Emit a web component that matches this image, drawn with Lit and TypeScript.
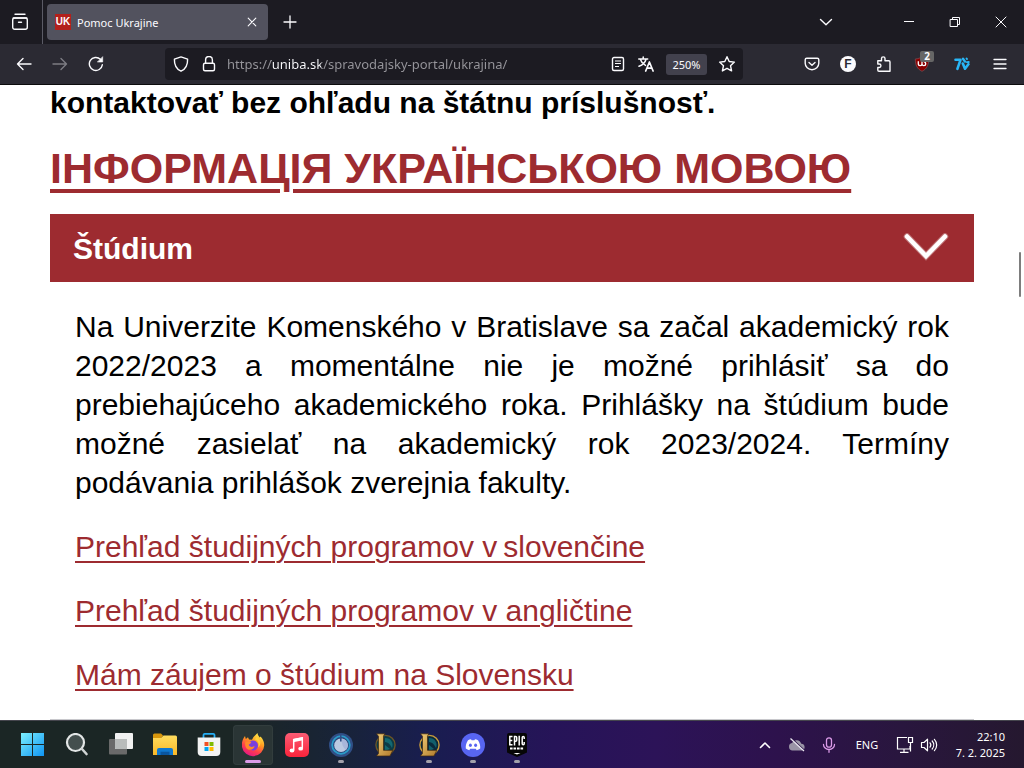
import { LitElement, html, css, svg, TemplateResult } from "lit";
import { customElement } from "lit/decorators.js";

/* ---------- browser icons ---------- */
const line = (size: number, body: TemplateResult) => html`<svg
  width=${size} height=${size} viewBox="0 0 ${size} ${size}" fill="none" stroke="currentColor"
  stroke-width="1.4" stroke-linecap="round" stroke-linejoin="round" aria-hidden="true">${body}</svg>`;

const icons = {
  view: line(18, svg`<path d="M4 1.2h10"/><path d="M2.2 5h13.6"/><rect x="1.7" y="5" width="14.6" height="11.3" rx="2"/><path d="M7.5 9.2h3"/>`),
  closeTab: line(10, svg`<path d="M1.2 1.2l7.6 7.6M8.8 1.2l-7.6 7.6" stroke-width="1.1"/>`),
  plus: line(14, svg`<path d="M7 1v12M1 7h12" stroke-width="1.3"/>`),
  chevron: line(14, svg`<path d="M1.5 4.5L7 9.8l5.5-5.3"/>`),
  minimize: line(12, svg`<path d="M1 5.5h10" stroke-width="1" stroke-linecap="butt"/>`),
  restore: line(12, svg`<path d="M1.5 3.5h7v7h-7zM3.5 3.5v-2h7v7h-2" stroke-width="1" stroke-linejoin="miter"/>`),
  close: line(12, svg`<path d="M1 1l10 10M11 1L1 11" stroke-width="1"/>`),
  back: line(16, svg`<path d="M15 8H1.5M7 2.5L1.5 8 7 13.5"/>`),
  forward: line(16, svg`<path d="M1 8h13.500M9 2.500L14.500 8 9 13.500"/>`),
  reload: line(16, svg`<path d="M14.300 8.800A6.500 6.500 0 1 1 12.400 3.300"/><path d="M14.700 1v5h-5z" fill="currentColor" stroke-width=".6"/>`),
  shield: line(16, svg`<path d="M8 .9L14.600 3.200c.2 5.600-1.700 9.700-6.600 12C3.100 12.900 1.200 8.800 1.400 3.200z"/>`),
  lock: line(16, svg`<rect x="2.500" y="7.200" width="11" height="7.600" rx="1.500"/><path d="M4.600 7V3.900a3.400 3.400 0 0 1 6.800 0V7"/>`),
  reader: line(16, svg`<rect x="2.500" y="1.500" width="11" height="13" rx="1.500"/><path d="M5 5h6M5 7.500h6M5 10.500h4" stroke-width="1.200" stroke-linecap="butt"/>`),
  translate: line(16, svg`<path d="M.7 3h9M5.200 .9V3M2.300 3.200c1 3 3 5 5.200 6.200M8 3.200C7.300 6 4.500 9 1 10.300" stroke-width="1.500"/><path d="M7.700 15l3.700-9 3.700 9M9 12.200h4.900" stroke-width="1.700"/>`),
  star: line(18, svg`<path d="M9 1.700l2.200 4.800 5.200.6-3.900 3.600 1.100 5.200L9 13.300l-4.600 2.600 1.100-5.200L1.600 7.100l5.200-.6z"/>`),
  pocket: line(16, svg`<path d="M2.700 2.200h10.600a1.500 1.500 0 0 1 1.500 1.500v3.500a6.800 6.500 0 0 1-13.600 0V3.700a1.500 1.500 0 0 1 1.500-1.500z"/><path d="M5 6.500l3 2.700 3-2.700"/>`),
  puzzle: line(16, svg`<path d="M1.800 4.800h3.700V2.600a1.700 1.700 0 0 1 3.500 0v2.200h3.800a1.200 1.200 0 0 1 1.200 1.200v9.200H3a1.200 1.200 0 0 1-1.200-1.200v-2.500h1.400a1.700 1.700 0 0 0 0-3.500H1.800z"/>`),
  menu: line(14, svg`<path d="M1 2.500h12M1 7h12M1 11.500h12" stroke-width="1.300"/>`),
  seven: html`<svg width="16" height="14" viewBox="0 0 16 14" aria-hidden="true"><g fill="none" stroke="#29b6f6" stroke-linecap="round" stroke-linejoin="round"><path d="M1.500 2.800h5L3.400 11.800" stroke-width="2.600"/><path d="M8.800 6.500l2.200 5.200 3.400-4.500" stroke-width="2.600"/><path d="M9 1.800l2 2.800" stroke-width="2.400"/><path d="M12.500 1.500l.5.500M12.800 5.200l2-.2" stroke-width="1.800"/></g></svg>`,
  ublock: html`<svg width="16" height="16" viewBox="0 0 16 16" aria-hidden="true"><path d="M8 .8c2 1.300 4 2 6.700 2.200 0 6-1.600 9.800-6.700 12.300C2.900 12.800 1.300 9 1.300 3 4 2.800 6 2.100 8 .8z" fill="#8a0000" stroke="#7a4a50" stroke-width=".8"/><path d="M4.300 5.200v2.600a1.850 1.850 0 0 0 3.700 0V5.200M8 7.800a1.850 1.850 0 0 0 3.700 0c0-1.500-1-2-1.800-2" fill="none" stroke="#fff" stroke-width="1.300"/></svg>`,
  accordion: html`<svg width="48" height="32" viewBox="0 0 48 32" fill="none" stroke="#fff" stroke-linecap="round" aria-hidden="true"><path d="M5 4.500l19 19.500L43 4.500" stroke-width="6.500" opacity=".35"/><path d="M5 4.500l19 19.500L43 4.500" stroke-width="4.500"/></svg>`,
};

/* ---------- taskbar icons ---------- */
const league = (rim: string, teal: string) => svg`
  <circle cx="12.500" cy="12" r="9.600" fill=${teal} stroke=${rim} stroke-width="1.400"/>
  <path d="M12 5c6 0 9 5 7 10-2-4-4-6-7-6zM12 12l5 4-5 2z" fill="#1a8d93" opacity=".55"/>
  <path d="M3.500 .8h8.300l-1.300 2.300v14.200h9.300L17 23H3.500l2-2.600V3.300z" fill="url(#gold)" stroke="#3c260e" stroke-width=".7"/>`;

const pic = (name: string, body: TemplateResult) => ({
  name,
  art: html`<svg width="24" height="24" viewBox="0 0 24 24" aria-hidden="true">
    <defs>
      <linearGradient id="win" gradientUnits="userSpaceOnUse" x1="0" y1="0" x2="24" y2="24"><stop offset="0" stop-color="#7cf0ff"/><stop offset="1" stop-color="#0a90f2"/></linearGradient>
      <linearGradient id="gold" x1="0" y1="0" x2="1" y2="1"><stop offset="0" stop-color="#f0cc76"/><stop offset="1" stop-color="#b07a2c"/></linearGradient>
      <linearGradient id="folder" x1="0" y1="0" x2="0" y2="1"><stop offset="0" stop-color="#ffdc5e"/><stop offset="1" stop-color="#f9b827"/></linearGradient>
      <linearGradient id="fox" x1=".8" y1="0" x2=".3" y2="1"><stop offset="0" stop-color="#fff44f"/><stop offset=".4" stop-color="#ff9a1f"/><stop offset=".7" stop-color="#ff3f4b"/><stop offset="1" stop-color="#e31587"/></linearGradient>
      <linearGradient id="music" x1="0" y1="0" x2="0" y2="1"><stop offset="0" stop-color="#fb5c74"/><stop offset="1" stop-color="#fa233b"/></linearGradient>
    </defs>${body}</svg>`,
});

type App = { name: string; art: TemplateResult; state?: "active" | "open" };
const apps: App[] = [
  pic("Štart", svg`<path d="M0 0h11v11H0zM12 0h11v11H12zM0 12h11v11H0zM12 12h11v11H12z" fill="url(#win)"/>`),
  pic("Hľadať", svg`<circle cx="10.500" cy="9.500" r="8.500" fill="#444f4e" stroke="#e3e6e6" stroke-width="2.200"/><path d="M17 16l4.500 5" stroke="#d0d4d4" stroke-width="2.600" stroke-linecap="round"/>`),
  pic("Zobrazenie úloh", svg`<rect x="0" y="6" width="18" height="15.500" rx="1" fill="#6a6a6a"/><rect x="6" y="0" width="18" height="16" rx="1" fill="#f1f1f1"/><path d="M6 6h12v10H7a1 1 0 0 1-1-1z" fill="#b9bcbb"/>`),
  pic("Prieskumník", svg`<path d="M0 2A1.500 1.500 0 0 1 1.500.5H8l2 2-2 3H0z" fill="#d8960c"/><path d="M0 5h8L10.500 2.500H22.500A1.500 1.500 0 0 1 24 4V22H0z" fill="url(#folder)"/><path d="M4 22V17A2 2 0 0 1 6 15H18a2 2 0 0 1 2 2V22z" fill="#0f78cf"/><path d="M7.500 18.700h9V22h-9z" fill="#0a559e"/>`),
  pic("Obchod", svg`<path d="M6.500 5V1.900A1.200 1.200 0 0 1 7.700.9h8.600a1.200 1.200 0 0 1 1.200 1V5" fill="none" stroke="#26aef5" stroke-width="1.800"/><path d="M.7 4.500h22.600V19a4 4 0 0 1-4 4H4.700a4 4 0 0 1-4-4z" fill="#f3f3f3"/><path d="M7.500 9h4v4h-4z" fill="#f25022"/><path d="M12.500 9h4v4h-4z" fill="#7fba00"/><path d="M7.500 14h4v4h-4z" fill="#00a4ef"/><path d="M12.500 14h4v4h-4z" fill="#ffb900"/>`),
  { ...pic("Firefox", svg`<path d="M1 9.500C1.500 7 2.500 4.800 4 3l.8 3L7 4.200l1 2.300 3 .3L12.500 4 16.500 0c.2 2.200 1.200 3.200 2.300 4.500l.8-1C22.500 7 23.300 9.700 23.200 12.500A11.200 11.200 0 0 1 1 14z" fill="url(#fox)"/><circle cx="12" cy="12.500" r="5" fill="#7a3fe0"/><path d="M4.500 8.500l6 .3-1.500 2.200c-1.500.2-1.500 1.300-.3 2.200 2 1.300 3.800.5 5-.5-.5 3-3.200 4.600-6 4C4.500 15.600 3.500 12 4.500 8.500z" fill="#ff8a2a"/><path d="M14 6.500c3 1 4.500 4 3 8 1.500-1 3-3.500 2.300-6.500L16 3.500z" fill="#ffcf3b"/>`), state: "active" },
  pic("Hudba", svg`<rect width="24" height="24" rx="5" fill="url(#music)"/><path d="M8.700 17V6.700L17.300 5v10" fill="none" stroke="#fff" stroke-width="1.500"/><path d="M8 6l10-2v3.200L8 9.200z" fill="#fff"/><ellipse cx="7" cy="17.500" rx="2.400" ry="1.900" fill="#fff"/><ellipse cx="15.700" cy="15.700" rx="2.400" ry="1.900" fill="#fff"/>`),
  { ...pic("Klient", svg`<circle cx="12" cy="12" r="12" fill="#304f86"/><circle cx="12" cy="12" r="8.800" fill="#2b4478" stroke="#2a9cc8" stroke-width="1.800"/><circle cx="12" cy="12.300" r="6.800" fill="#bccae2"/><path d="M12.500 5.500a6.800 6.800 0 0 1 4.500 11.400c-3-2-4.500-6-4.500-11.400z" fill="#a9b7da"/><path d="M11 1.500h1.600v7H11z" fill="#304f86"/>`), state: "open" },
  pic("League of Legends", league("#6d5526", "#0c3b46")),
  { ...pic("Riot", league("#c89b3c", "#0a2a3c")), state: "open" },
  { ...pic("Discord", svg`<circle cx="12" cy="12" r="12" fill="#5865f2"/><path d="M7 7.200c1-.6 2-.9 3-1l.6 1h2.800l.6-1c1 .1 2 .4 3 1 1.700 2.600 2.500 5.300 2.200 8.300-1.100.9-2.300 1.400-3.500 1.700l-.9-1.500H9.200l-.9 1.500c-1.200-.3-2.400-.8-3.500-1.700-.3-3 .5-5.700 2.200-8.300z" fill="#fff"/><ellipse cx="9.400" cy="12.300" rx="1.500" ry="1.700" fill="#5865f2"/><ellipse cx="14.600" cy="12.300" rx="1.500" ry="1.700" fill="#5865f2"/>`), state: "open" },
  { ...pic("Epic Games", svg`<path d="M4 0h16a2 2 0 0 1 2 2v17.500L12 24 2 19.500V2a2 2 0 0 1 2-2z" fill="#060606"/><g fill="none" stroke="#fff" stroke-width="1.500"><path d="M7.500 3.500H4.800v8.200h2.700M4.800 7.500h2.500M9.500 12.400V3.500h1.200a1 1 0 0 1 1 1v2.800a1 1 0 0 1-1 1H9.500M14.200 2.800v9.600M19.200 6V4.500a1 1 0 0 0-2 0v6.200a1 1 0 0 0 2 0V9"/></g><path d="M5 15.500h14" stroke="#fff" stroke-width="2" stroke-dasharray="2.600 .9"/><path d="M8.500 20h7L12 21.600z" fill="#fff"/>`), state: "open" },
];

const tray = {
  up: line(14, svg`<path d="M2.500 9.500L7 5l4.500 4.500" stroke-width="1.600"/>`),
  cloud: html`<svg width="18" height="16" viewBox="0 0 18 16" aria-hidden="true"><path d="M4.500 13.500a3.800 3.800 0 0 1-.5-7.500 5 5 0 0 1 9.300.8 3.400 3.400 0 0 1 .7 6.700z" fill="#9a94a6"/><path d="M3 1l13.500 12.500" stroke="#2b1548" stroke-width="1.500"/><path d="M2.500 1.500l13.500 12.500" stroke="#ece8f2" stroke-width="1.200"/></svg>`,
  mic: html`<svg width="14" height="16" viewBox="0 0 14 16" fill="none" stroke="#dc9be8" stroke-width="1.300" stroke-linecap="round" aria-hidden="true"><rect x="4.500" y=".8" width="5" height="9.400" rx="2.500"/><path d="M1.500 7.500a5.500 5 0 0 0 11 0M7 12.700v2.600"/></svg>`,
  screen: html`<svg width="18" height="18" viewBox="0 0 18 18" fill="none" stroke="#fff" stroke-width="1.200" aria-hidden="true"><path d="M11 1.500H1.500v11.500h12.500V10M8 13v3M4 16.400h8.500M12.500 1.500h4v5h-4zM14.500 6.500v9"/></svg>`,
  sound: html`<svg width="18" height="16" viewBox="0 0 18 16" fill="none" stroke="#fff" stroke-width="1.200" stroke-linecap="round" stroke-linejoin="round" aria-hidden="true"><path d="M1.500 5.500h2.500l3.500-3.300v11.600L4 10.500H1.500zM10 5.800c1 1.300 1 3.100 0 4.400M12.200 4c2 2.300 2 5.700 0 8M14.400 2.300c3 3.200 3 8.200 0 11.400"/></svg>`,
};

@customElement("browser-chrome")
export class BrowserChrome extends LitElement {
  static styles = css`
    :host { display: block; flex: none; color: #fbfbfe; font-family: "Noto Sans", "Open Sans", sans-serif; font-size: 12px; border-bottom: 1px solid #0c0c0d; }
    button { all: unset; box-sizing: border-box; display: grid; place-items: center; flex: none; }
    svg { display: block; }
    .tabs { display: flex; height: 44px; background: #1c1b22; }
    .view { width: 40px; }
    .rule { width: 1px; margin: 0 4px 0 2px; background: #5b5b66; }
    .tab { display: flex; align-items: center; width: 221px; box-sizing: border-box; margin: 4px 0; padding: 0 6px 0 8px; border-radius: 4px; background: #52525e; }
    .fav { width: 16px; height: 16px; margin-right: 6px; background: #b3201b; font: bold 10px/16px "Liberation Sans", sans-serif; text-align: center; }
    .title { flex: 1; font-size: 11px; white-space: nowrap; }
    .closeTab { width: 20px; height: 24px; }
    .add { width: 44px; }
    .list { width: 36px; margin: 0 42px 0 auto; }
    .win { width: 46px; }
    .nav { display: flex; align-items: center; height: 40px; padding: 0 6px; background: #2b2a33; }
    .nav > button { width: 36px; height: 32px; }
    .nav > .wide { width: 40px; }
    .nav > .dim { color: #7d7c83; }
    .field { display: flex; flex: 1; align-items: center; height: 32px; box-sizing: border-box; margin: 0 51px; padding: 0 2px; border-radius: 4px; background: #1c1b22; min-width: 0; }
    .field button { width: 28px; height: 28px; }
    .url { flex: 1; min-width: 0; height: 28px; border: 0; padding: 0 4px; outline: 0; font: 13px "Noto Sans", "Open Sans", sans-serif; color: transparent; -webkit-background-clip: text; background-clip: text; background-image: linear-gradient(90deg, #97969c 0 48px, #fbfbfe 48px 98px, #97969c 98px); }
    .field .level { display: block; width: 41px; height: 21px; margin: 0 6px; border-radius: 3px; background: #42414d; font-size: 11px; line-height: 21px; text-align: center; }
    .face { width: 16px; height: 16px; border-radius: 8px; background: #fbfbfe; color: #2b2a33; font: bold 12px/16px "Liberation Sans", sans-serif; text-align: center; }
    .badged { position: relative; }
    .badge { position: absolute; left: 18px; top: 3px; width: 14px; height: 11px; border-radius: 2px; background: #666; font: bold 10px/11px "Open Sans", sans-serif; text-align: center; }
  `;
  render() {
    return html`
      <div class="tabs">
        <button class="view" aria-label="Firefox View">${icons.view}</button>
        <div class="rule"></div>
        <div class="tab">
          <span class="fav">UK</span><span class="title">Pomoc Ukrajine</span>
          <button class="closeTab" aria-label="Zavrieť kartu">${icons.closeTab}</button>
        </div>
        <button class="add" aria-label="Nová karta">${icons.plus}</button>
        <button class="list" aria-label="Zoznam kariet">${icons.chevron}</button>
        <button class="win" aria-label="Minimalizovať">${icons.minimize}</button>
        <button class="win" aria-label="Obnoviť">${icons.restore}</button>
        <button class="win" aria-label="Zavrieť">${icons.close}</button>
      </div>
      <div class="nav">
        <button aria-label="Späť">${icons.back}</button>
        <button class="dim" aria-label="Dopredu">${icons.forward}</button>
        <button aria-label="Obnoviť stránku">${icons.reload}</button>
        <div class="field">
          <button aria-label="Ochrana">${icons.shield}</button>
          <button aria-label="Zabezpečenie">${icons.lock}</button>
          <input class="url" aria-label="Adresa" .value=${"https://uniba.sk/spravodajsky-portal/ukrajina/"} />
          <button aria-label="Čítačka">${icons.reader}</button>
          <button aria-label="Preložiť">${icons.translate}</button>
          <button class="level">250%</button>
          <button aria-label="Záložka">${icons.star}</button>
        </div>
        <button aria-label="Pocket">${icons.pocket}</button>
        <button aria-label="Účet"><span class="face">F</span></button>
        <button aria-label="Rozšírenia">${icons.puzzle}</button>
        <button class="wide badged" aria-label="uBlock">${icons.ublock}<span class="badge">2</span></button>
        <button class="wide" aria-label="7TV">${icons.seven}</button>
        <button aria-label="Ponuka">${icons.menu}</button>
      </div>`;
  }
}

@customElement("task-bar")
export class TaskBar extends LitElement {
  static styles = css`
    :host { display: flex; flex: none; align-items: center; height: 48px; box-sizing: border-box; padding: 0 19px 0 13px; border-top: 1px solid #45454d; color: #fff; font: 11px/16px "Noto Sans", "Open Sans", sans-serif; background: linear-gradient(90deg, #1b2625 0 24%, #18233a 34%, #191d50 42%, #261458 54%, #2c1358 64%, #2d124c 76%, #29163e 88%, #25182f); }
    button { all: unset; box-sizing: border-box; display: grid; place-items: center; }
    svg { display: block; }
    .apps { display: flex; gap: 4px; flex: 1; }
    .app { position: relative; width: 40px; height: 40px; border-radius: 4px; }
    .app.active { background: #2a3535; box-shadow: inset 0 0 0 1px #323d3d; }
    .app.open::after, .app.active::after { content: ""; position: absolute; bottom: 2px; left: 17px; width: 6px; height: 3px; border-radius: 2px; background: #a3a1ab; }
    .app.active::after { left: 12px; width: 16px; background: #dc9be8; }
    .tray { display: flex; align-items: center; }
    .slot { width: 32px; height: 40px; }
    .lang { width: 44px; height: 40px; }
    .net { display: flex; align-items: center; justify-content: center; gap: 6px; width: 56px; height: 40px; }
    .clock { width: 60px; text-align: right; display: block; white-space: nowrap; }
  `;
  render() {
    return html`
      <div class="apps">
        ${apps.map((a) => html`<button class="app ${a.state ?? ""}" aria-label=${a.name}>${a.art}</button>`)}
      </div>
      <div class="tray">
        <button class="slot" aria-label="Skryté ikony">${tray.up}</button>
        <button class="slot" aria-label="OneDrive">${tray.cloud}</button>
        <button class="slot" aria-label="Mikrofón">${tray.mic}</button>
        <button class="lang">ENG</button>
        <button class="net" aria-label="Sieť a zvuk">${tray.screen}${tray.sound}</button>
        <button class="clock">22:10<br />7. 2. 2025</button>
      </div>`;
  }
}

@customElement("app-root")
export class AppRoot extends LitElement {
  static styles = css`
    :host { display: flex; flex-direction: column; height: 100vh; overflow: hidden; background: #fff; color: #000; font: 30px/39px "Liberation Sans", Arial, sans-serif; }
    a { color: #9d2b30; text-decoration: underline 2px; text-underline-offset: 4px; }
    p, h2, h3 { margin: 0; }
    .page { position: relative; flex: 1; min-height: 0; overflow: hidden; padding: 0 50px; }
    .lead { font-weight: bold; line-height: 36px; }
    .lang { margin: 21px 0 19px; font-size: 43px; line-height: 53px; }
    .lang a { text-decoration-thickness: 4px; text-underline-offset: 6px; }
    .head { all: unset; display: flex; align-items: center; justify-content: space-between; box-sizing: border-box; width: 100%; height: 68px; padding: 0 24px 0 23px; background: #9d2b30; color: #fff; font-size: 30px; font-weight: bold; }
    .head svg { display: block; }
    .panel { display: flex; flex-direction: column; gap: 25px; padding: 25px; border-bottom: 1px solid #c8c8cc; }
    .text { text-align: justify; }
    .thumb { position: absolute; top: 167px; right: 3px; width: 2px; height: 45px; border-radius: 1px; background: #7d7d7d; }
  `;
  render() {
    return html`
      <browser-chrome></browser-chrome>
      <main class="page">
        <p class="lead">kontaktovať bez ohľadu na štátnu príslušnosť.</p>
        <h2 class="lang"><a href="#ua">ІНФОРМАЦІЯ УКРАЇНСЬКОЮ МОВОЮ</a></h2>
        <h3><button class="head" aria-expanded="true">Štúdium ${icons.accordion}</button></h3>
        <section class="panel">
          <p class="text">Na Univerzite Komenského v Bratislave sa začal akademický rok 2022/2023 a momentálne nie je možné prihlásiť sa do prebiehajúceho akademického roka. Prihlášky na štúdium bude možné zasielať na akademický rok 2023/2024. Termíny podávania prihlášok zverejnia fakulty.</p>
          <p><a href="#sk">Prehľad študijných programov v&#8201;slovenčine</a></p>
          <p><a href="#en">Prehľad študijných programov v angličtine</a></p>
          <p><a href="#zaujem">Mám záujem o štúdium na Slovensku</a></p>
        </section>
        <div class="thumb"></div>
      </main>
      <task-bar></task-bar>`;
  }
}
